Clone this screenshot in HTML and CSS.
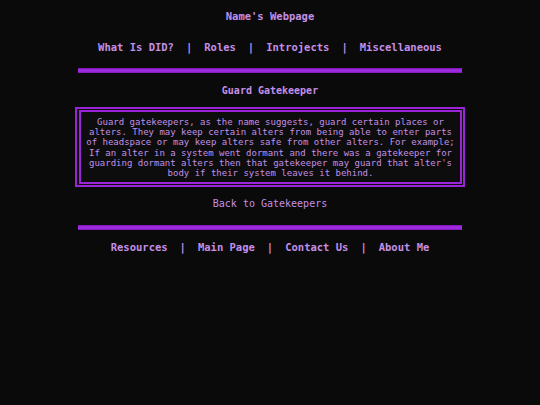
FILE: index.html
```html
<!DOCTYPE html>
<html lang="en">
  <head>
    <meta charset="UTF-8" />
    <meta name="viewport" content="width=device-width, initial-scale=1.0" />
    <title>Guard Gatekeeper</title>
    <link rel="stylesheet" href="styles.css">
  </head>
  <body>
    <div class="page">
      <h1 class="site-title">Name's Webpage</h1>
      <nav class="nav">
        <a href="#">What Is DID?</a><span class="sep">|</span><a href="#">Roles</a><span class="sep">|</span><a href="#">Introjects</a><span class="sep">|</span><a href="#">Miscellaneous</a>
      </nav>
      <hr class="rule" />
      <h2 class="page-title">Guard Gatekeeper</h2>
      <div class="info-box">
        <p>Guard gatekeepers, as the name suggests, guard certain places or alters. They may keep certain alters from being able to enter parts of headspace or may keep alters safe from other alters. For example; If an alter in a system went dormant and there was a gatekeeper for guarding dormant alters then that gatekeeper may guard that alter's body if their system leaves it behind.</p>
      </div>
      <a class="back-link" href="#">Back to Gatekeepers</a>
      <hr class="rule" />
      <nav class="nav footer-nav">
        <a href="#">Resources</a><span class="sep">|</span><a href="#">Main Page</a><span class="sep">|</span><a href="#">Contact Us</a><span class="sep">|</span><a href="#">About Me</a>
      </nav>
    </div>
  </body>
</html>
```

FILE: styles.css
```css
body {
  margin: 0;
  background-color: #0a0a0a;
  color: #c48fe6;
  font-family: "DejaVu Sans Mono", "Liberation Mono", monospace;
}

.page {
  width: 390px;
  margin: 0 auto;
  padding-top: 9px;
  text-align: center;
}

a {
  color: #c48fe6;
  text-decoration: none;
}

.site-title {
  margin: 0;
  font-size: 10.5px;
  line-height: 14px;
}

.nav {
  margin-top: 17px;
  font-size: 10.5px;
  font-weight: bold;
  line-height: 14px;
}

.sep {
  margin: 0 12px;
}

.rule {
  height: 5px;
  margin: 14px 3px 0;
  border: none;
  background: linear-gradient(#7a12b4, #a12ee2 40%, #a12ee2 60%, #8316c0);
}

.page-title {
  margin: 11px 0 0;
  font-size: 10px;
  line-height: 14px;
}

.info-box {
  margin-top: 9px;
  padding: 5px 5px 4px;
  border: 5px double #9a24d8;
  border-left-width: 6px;
  background-color: #0d0d0d;
}

.info-box p {
  margin: 0;
  font-size: 9px;
  line-height: 10.2px;
}

.back-link {
  display: block;
  margin-top: 10px;
  font-size: 10px;
  line-height: 14px;
}

.footer-nav {
  margin-top: 10px;
}
```
